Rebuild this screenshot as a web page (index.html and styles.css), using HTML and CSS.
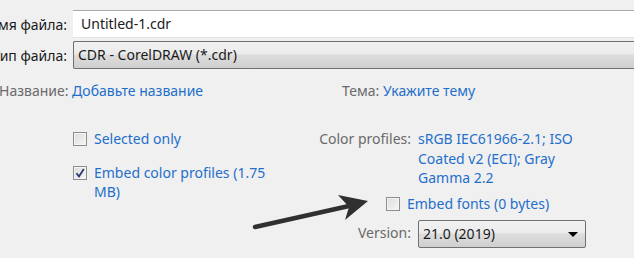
FILE: index.html
```html
<!DOCTYPE html>
<html lang="ru">
<head>
  <meta charset="UTF-8" />
  <title>Save Drawing</title>
  <link rel="stylesheet" href="styles.css">
</head>
<body>
  <div class="dialog">
    <div class="file-rows">
      <label class="lbl">Имя файла:</label>
      <div class="input">Untitled-1.cdr</div>
      <label class="lbl">Тип файла:</label>
      <div class="combo">CDR - CorelDRAW (*.cdr)</div>
    </div>

    <div class="meta">
      <div class="meta-item"><span class="lbl">Название:</span> <a class="link">Добавьте название</a></div>
      <div class="meta-item topic"><span class="lbl">Тема:</span> <a class="link">Укажите тему</a></div>
    </div>

    <div class="options">
      <div class="left">
        <div class="check"><span class="box"></span><span class="link">Selected only</span></div>
        <div class="check"><span class="box checked"><svg viewBox="0 0 12 12" width="12" height="12"><path d="M2.5 6.2 L5 9.5 L9.8 2" fill="none" stroke="#2a3a6e" stroke-width="1.8"/></svg></span><span class="link">Embed color profiles (1.75 MB)</span></div>
      </div>
      <div class="right">
        <span class="lbl">Color profiles:</span>
        <span class="link profiles">sRGB IEC61966-2.1; ISO Coated v2 (ECI); Gray Gamma 2.2</span>
        <div class="check fonts"><span class="box"></span><span class="link">Embed fonts (0 bytes)</span></div>
        <span class="lbl version-lbl">Version:</span>
        <div class="combo version">21.0 (2019)<span class="caret"></span></div>
      </div>
    </div>

    <!-- annotation arrow -->
    <svg class="arrow" width="130" height="45" viewBox="0 0 130 45">
      <path d="M10 37 L104 16" stroke="#303030" stroke-width="4.5" stroke-linecap="round"/>
      <path d="M93 5 L123 11 L100 30 L104 17 Z" fill="#303030"/>
    </svg>
  </div>
</body>
</html>
```

FILE: styles.css
```css
* {
  box-sizing: border-box;
  margin: 0;
  padding: 0;
}

body {
  background: #f0f0f0;
  font-family: 'Noto Sans', sans-serif;
  font-size: 14px;
  color: #1a1a1a;
  overflow: hidden;
}

.dialog {
  position: relative;
  margin-left: -13px;
  padding-top: 10px;
}

.lbl {
  color: #6a6a6a;
  white-space: nowrap;
}

.link {
  color: #1f6fcb;
}

.file-rows {
  display: grid;
  grid-template-columns: 80px 1fr;
  column-gap: 6px;
  row-gap: 3px;
  align-items: center;
}

.file-rows .lbl {
  text-align: right;
  color: #1a1a1a;
}

.input {
  height: 28px;
  padding: 3px 8px;
  background: #fff;
  border-top: 1px solid #a8a8a8;
  border-bottom: 1px solid #e4e4e4;
  line-height: 20px;
}

.combo {
  height: 28px;
  padding: 3px 4px;
  border: 1px solid #707070;
  border-radius: 2px;
  background: linear-gradient(#f2f2f2 0%, #ebebeb 45%, #dddddd 50%, #cfcfcf 100%);
  line-height: 20px;
}

.file-rows .combo {
  border-right: none;
  border-radius: 2px 0 0 2px;
}

.meta {
  display: flex;
  margin-top: 12px;
  line-height: 20px;
}

.meta-item {
  flex: none;
  width: 355px;
  padding-left: 12px;
}

.meta-item.topic {
  width: auto;
  padding-left: 0;
}

.options {
  display: flex;
  margin-top: 28px;
  line-height: 19.5px;
}

.left {
  flex: none;
  width: 300px;
  padding-left: 86px;
  display: flex;
  flex-direction: column;
  gap: 14px;
}

.check {
  display: flex;
  align-items: flex-start;
  gap: 7px;
}

.box {
  flex: none;
  width: 14px;
  height: 14px;
  margin-top: 3px;
  border: 1px solid #8e8e8e;
  background: linear-gradient(135deg, #dcdcdc, #f6f6f6);
  box-shadow: inset 0 0 0 1px #f4f4f4;
  display: flex;
  align-items: center;
  justify-content: center;
}

.left .check .link {
  width: 190px;
}

.right {
  display: grid;
  grid-template-columns: 124px 180px;
  column-gap: 7px;
  align-items: start;
}

.right > .lbl {
  text-align: right;
}

.fonts {
  grid-column: 1 / 3;
  padding-left: 99px;
  margin-top: 6px;
}

.version-lbl {
  margin-top: 10px;
}

.combo.version {
  margin-top: 7px;
  width: 168px;
  position: relative;
  padding-left: 4px;
}

.caret {
  position: absolute;
  right: 7px;
  top: 11px;
  border-left: 5px solid transparent;
  border-right: 5px solid transparent;
  border-top: 5px solid #000;
}

.arrow {
  position: absolute;
  left: 258px;
  top: 190px;
}
```
